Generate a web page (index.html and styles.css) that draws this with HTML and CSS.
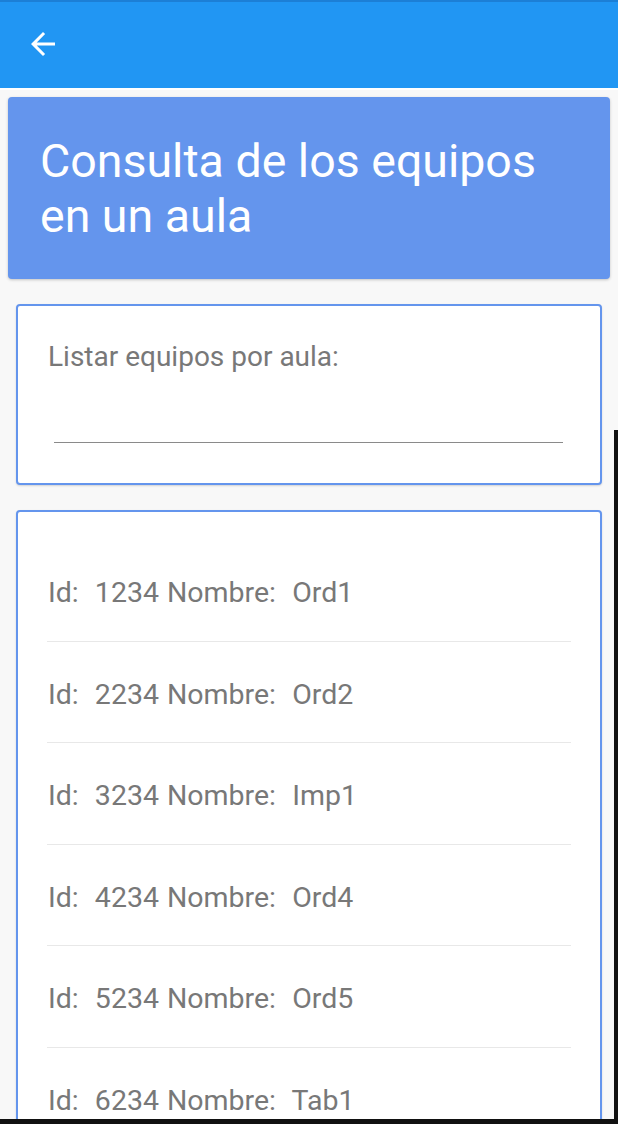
FILE: index.html
```html
<!DOCTYPE html>
<html lang="es">
<head>
<meta charset="utf-8">
<title>Consulta de los equipos en un aula</title>
<link rel="stylesheet" href="styles.css">
</head>
<body>
<header class="toolbar">
  <button class="back" aria-label="Volver">
    <svg viewBox="0 0 24 24" width="36" height="36"><path fill="#fff" d="M20 11H7.83l5.59-5.59L12 4l-8 8 8 8 1.41-1.41L7.83 13H20v-2z"/></svg>
  </button>
</header>
<main class="content">
  <section class="title-card">
    <h1>Consulta de los equipos en un aula</h1>
  </section>
  <section class="card input-card">
    <label class="label" for="aula">Listar equipos por aula:</label>
    <input id="aula" class="field" type="text">
  </section>
  <section class="card list-card">
    <ul class="list">
      <li class="item">Id:  1234 Nombre:  Ord1</li>
      <li class="item">Id:  2234 Nombre:  Ord2</li>
      <li class="item">Id:  3234 Nombre:  Imp1</li>
      <li class="item">Id:  4234 Nombre:  Ord4</li>
      <li class="item">Id:  5234 Nombre:  Ord5</li>
      <li class="item">Id:  6234 Nombre:  Tab1</li>
      <li class="item">Id:  7234 Nombre:  Ord7</li>
    </ul>
  </section>
</main>
<div class="edge-right"></div>
<div class="edge-bottom"></div>
</body>
</html>
```
FILE: styles.css
```css
* { box-sizing: border-box; }
html, body {
  margin: 0;
  padding: 0;
  height: 100%;
  overflow: hidden;
}
body {
  background: #f8f8f8;
  font-family: Roboto, "Noto Sans", Arial, sans-serif;
}
.toolbar {
  height: 90px;
  background: #2196f3;
  border-top: 2px solid #1c7fd6;
  border-bottom: 2px solid #ffffff;
  display: flex;
  align-items: center;
  padding-left: 25px;
}
.back {
  background: none;
  border: 0;
  padding: 0;
  width: 36px;
  height: 36px;
  margin-top: -2px;
  display: block;
}
.back svg { display: block; }
.content {
  padding: 7px 8px 0 10px;
  display: flex;
  flex-direction: column;
}
.title-card {
  background: #6495ed;
  border-radius: 4px;
  box-shadow: 0 1px 3px rgba(0,0,0,0.22);
  padding: 37px 20px 36px 32px;
  margin-left: -2px;
}
.title-card h1 {
  margin: 0;
  color: #fff;
  font-weight: 400;
  font-size: 46.5px;
  line-height: 54.5px;
  width: 520px;
}
.card {
  background: #fff;
  border: 2px solid #6495ed;
  border-radius: 4px;
  box-shadow: 0 1px 2px rgba(0,0,0,0.15);
  margin: 0 8px 0 6px;
}
.input-card {
  margin-top: 25px;
  height: 181px;
  padding: 34px 34px 0 30px;
  display: flex;
  flex-direction: column;
}
.label {
  font-size: 28px;
  line-height: 33px;
  color: #787878;
}
.field {
  margin: 38px 0 0 6px;
  width: 509px;
  height: 32px;
  border: 0;
  border-bottom: 1.5px solid #8a8a8a;
  background: transparent;
  outline: none;
  font: inherit;
  padding: 0;
}
.list-card {
  margin-top: 25px;
  height: 700px;
  padding: 28px 29px 0 29px;
}
.list {
  list-style: none;
  margin: 0;
  padding: 0;
}
.item {
  white-space: pre;
  font-size: 28.5px;
  word-spacing: 1px;
  line-height: 33.5px;
  color: #787878;
  padding: 36px 0 31px 1px;
  border-bottom: 1px solid #e8e8e8;
}
.edge-right {
  position: fixed;
  right: 0;
  top: 430px;
  bottom: 0;
  width: 4px;
  background: #111;
}
.edge-bottom {
  position: fixed;
  left: 0;
  right: 0;
  bottom: 0;
  height: 5px;
  background: #111;
}
```
